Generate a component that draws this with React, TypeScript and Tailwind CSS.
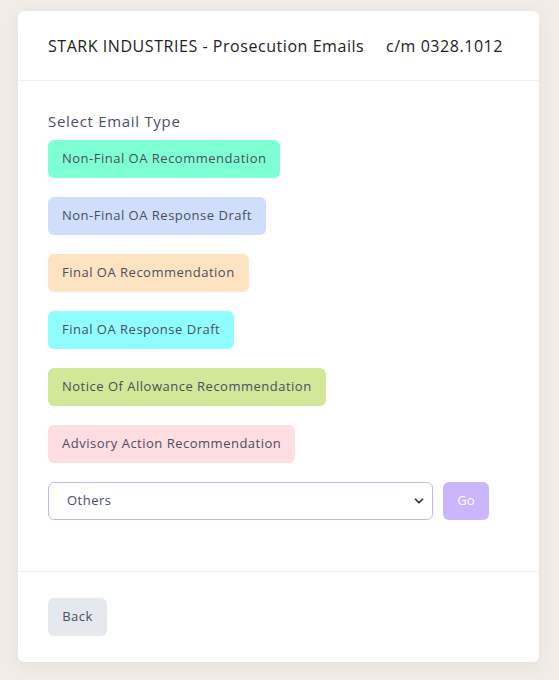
import { ChevronDown } from 'lucide-react';

const TYPES = [
  { label: 'Non-Final OA Recommendation', cls: 'bg-[#7effd4]' },
  { label: 'Non-Final OA Response Draft', cls: 'bg-[#cedefb]' },
  { label: 'Final OA Recommendation', cls: 'bg-[#fee3c3]' },
  { label: 'Final OA Response Draft', cls: 'bg-[#90feff]' },
  { label: 'Notice Of Allowance Recommendation', cls: 'bg-[#d0e898]' },
  { label: 'Advisory Action Recommendation', cls: 'bg-[#fedde3]' },
];

export default function App() {
  return (
    <div className="min-h-[680px] bg-[#f1ece7] pl-[18px] pr-[20px] pt-[11px] pb-[18px] font-['Open_Sans',sans-serif]">
      <div className="rounded-md bg-white shadow-[0_4px_16px_rgba(120,100,80,0.08)]">
        <div className="flex h-[70px] items-center justify-between border-b border-[#eef0f3] pl-[30px] pr-[36px] text-[16px] tracking-[0.55px] text-[#222]">
          <span>STARK INDUSTRIES - Prosecution Emails</span>
          <span>c/m 0328.1012</span>
        </div>

        <div className="px-[30px] pt-[29px] pb-[51px]">
          <p className="text-[15px] leading-[22px] tracking-[0.7px] text-[#4a4e69]">Select Email Type</p>
          <div className="mt-[8px] flex flex-col items-start gap-[19px]">
            {TYPES.map((t) => (
              <button
                key={t.label}
                className={`h-[38px] rounded-md px-[14px] text-[13px] tracking-[0.5px] text-[#4a4e60] ${t.cls}`}
              >
                {t.label}
              </button>
            ))}
          </div>
          <div className="mt-[19px] flex items-center gap-[10px]">
            <div className="relative w-[385px]">
              <div className="flex h-[38px] items-center rounded-md border border-[#c9b1fb] pl-[18px] text-[13px] tracking-[0.5px] text-[#4a4e60]">
                Others
              </div>
              <ChevronDown
                className="absolute right-[7px] top-[12px] h-[14px] w-[14px] text-[#333]"
                strokeWidth={3}
              />
            </div>
            <button className="h-[38px] w-[46px] rounded-md bg-[#cbb5fb] text-[13px] text-white">
              Go
            </button>
          </div>
        </div>

        <div className="border-t border-[#eef0f3] px-[30px] pt-[26px] pb-[26px]">
          <button className="h-[38px] w-[59px] rounded-md bg-[#e5e9ee] text-[13px] tracking-[0.5px] text-[#4a4e60]">
            Back
          </button>
        </div>
      </div>
    </div>
  );
}
